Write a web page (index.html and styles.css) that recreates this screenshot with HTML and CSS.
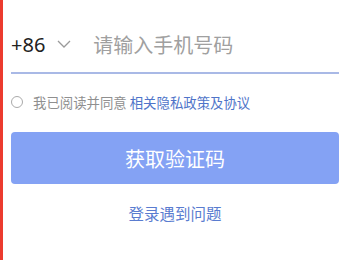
FILE: index.html
```html
<html>

<head>
  <title>登录</title>

  <link rel="stylesheet" href="styles.css">
</head>

<body>
  <div class="login">
    <div class="phone-row">
      <span class="code">+86</span>
      <svg class="arrow" width="14" height="8" viewBox="0 0 14 8">
        <path d="M1 1 L7 7 L13 1" fill="none" stroke="#9a9a9a" stroke-width="1.3" />
      </svg>
      <input class="phone" type="text" placeholder="请输入手机号码">
    </div>

    <div class="agree">
      <span class="radio"></span>
      <span class="agree-text">我已阅读并同意 <a href="#">相关隐私政策及协议</a></span>
    </div>

    <button class="btn" type="button">获取验证码</button>

    <div class="help">登录遇到问题</div>
  </div>
</body>

</html>
```

FILE: styles.css
```css
body {
  margin: 0;
  background-color: white;
  border-left: 3px solid #ec3b2f;
  height: 260px;
  box-sizing: border-box;
  font-family: "Noto Sans", "Noto Sans CJK SC", sans-serif;
}

.login {
  padding: 24px 25px 0 8px;
}

.phone-row {
  display: flex;
  align-items: center;
  height: 40px;
  border-bottom: 2px solid #a9b9e6;
  padding-bottom: 8px;
}

.code {
  font-size: 20px;
  color: #222;
}

.arrow {
  margin-left: 12px;
  margin-right: 22px;
}

.phone {
  flex: 1;
  border: none;
  outline: none;
  font-family: "Noto Sans CJK SC", sans-serif;
  font-size: 20px;
  padding: 0;
  color: #222;
}

.phone::placeholder {
  color: #a0a0a0;
}

.agree {
  display: flex;
  align-items: center;
  margin-top: 18px;
  font-family: "Noto Sans CJK SC", sans-serif;
  font-size: 13.4px;
  color: #8f8f8f;
}

.radio {
  width: 10px;
  height: 10px;
  border: 1px solid #aaa;
  border-radius: 50%;
  margin-right: 10px;
}

.agree-text>a {
  color: #4f74c9;
  text-decoration: none;
}

.btn {
  display: block;
  width: 100%;
  height: 52px;
  margin-top: 20px;
  border: none;
  border-radius: 4px;
  background-color: #84a2f4;
  color: white;
  font-family: "Noto Sans CJK SC", sans-serif;
  font-size: 20px;
}

.help {
  margin-top: 18px;
  text-align: center;
  font-family: "Noto Sans CJK SC", sans-serif;
  font-size: 15.5px;
  color: #5a7cd0;
}
```
